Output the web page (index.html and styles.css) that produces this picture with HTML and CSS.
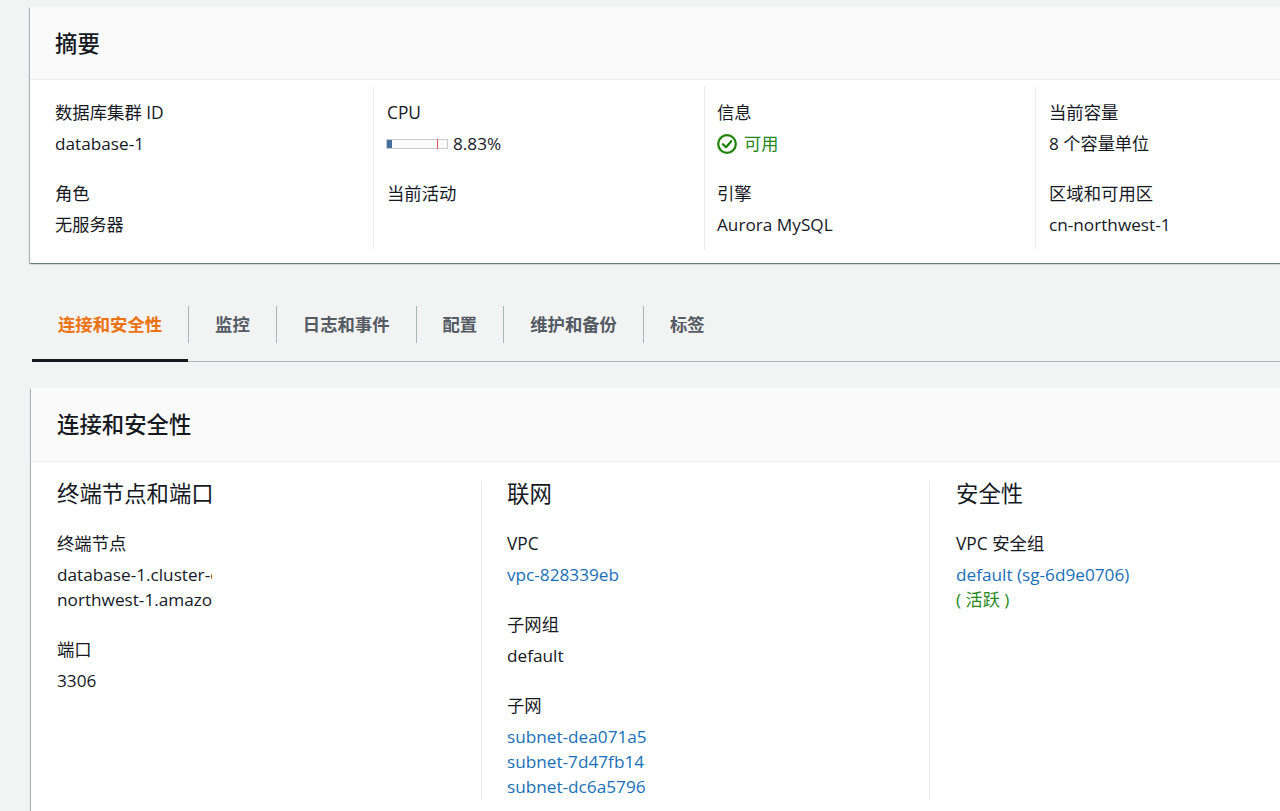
FILE: index.html
```html
<!DOCTYPE html>
<html lang="zh-CN">
<head>
    <meta charset="UTF-8">
    <meta name="viewport" content="width=device-width, initial-scale=1.0">
    <title>database-1</title>
    <link rel="stylesheet" href="styles.css">
</head>
<body>
    <div class="page">
        <div class="card summary">
            <div class="card-header"><h2>摘要</h2></div>
            <div class="summary-grid">
                <div class="col">
                    <div class="item"><div class="label">数据库集群 ID</div><div class="value">database-1</div></div>
                    <div class="item"><div class="label">角色</div><div class="value">无服务器</div></div>
                </div>
                <div class="col">
                    <div class="item">
                        <div class="label">CPU</div>
                        <div class="value cpu">
                            <svg class="meter" width="62" height="10" viewBox="0 0 62 10">
                                <rect x="0.5" y="0.5" width="61" height="9" fill="#fafafa" stroke="#c9cbcd"/>
                                <rect x="1" y="1" width="5" height="8" fill="#44709a"/>
                                <rect x="51" y="0" width="1" height="10" fill="#e8505a"/>
                            </svg>
                            <span>8.83%</span>
                        </div>
                    </div>
                    <div class="item"><div class="label">当前活动</div></div>
                </div>
                <div class="col">
                    <div class="item">
                        <div class="label">信息</div>
                        <div class="value status">
                            <svg width="20" height="20" viewBox="0 0 20 20" fill="none" stroke="#1d8102" stroke-width="2.2">
                                <circle cx="10" cy="10" r="8.8"/>
                                <path d="M6 10.2l3 3 5.2-6" stroke-linecap="round" stroke-linejoin="round"/>
                            </svg>
                            <span>可用</span>
                        </div>
                    </div>
                    <div class="item"><div class="label">引擎</div><div class="value">Aurora MySQL</div></div>
                </div>
                <div class="col">
                    <div class="item"><div class="label">当前容量</div><div class="value">8 个容量单位</div></div>
                    <div class="item"><div class="label">区域和可用区</div><div class="value">cn-northwest-1</div></div>
                </div>
            </div>
        </div>

        <div class="tabs">
            <a class="tab active">连接和安全性</a>
            <a class="tab">监控</a>
            <a class="tab">日志和事件</a>
            <a class="tab">配置</a>
            <a class="tab">维护和备份</a>
            <a class="tab">标签</a>
        </div>

        <div class="card conn">
            <div class="card-header"><h2>连接和安全性</h2></div>
            <div class="conn-grid">
                <div class="section">
                    <h3>终端节点和端口</h3>
                    <div class="item">
                        <div class="label">终端节点</div>
                        <div class="value clipped">database-1.cluster-cxq<br>northwest-1.amazonaws</div>
                    </div>
                    <div class="item"><div class="label">端口</div><div class="value">3306</div></div>
                </div>
                <div class="section">
                    <h3>联网</h3>
                    <div class="item"><div class="label">VPC</div><div class="value"><a class="link">vpc-828339eb</a></div></div>
                    <div class="item"><div class="label">子网组</div><div class="value">default</div></div>
                    <div class="item">
                        <div class="label">子网</div>
                        <div class="value"><a class="link">subnet-dea071a5</a><br><a class="link">subnet-7d47fb14</a><br><a class="link">subnet-dc6a5796</a></div>
                    </div>
                </div>
                <div class="section">
                    <h3>安全性</h3>
                    <div class="item">
                        <div class="label">VPC 安全组</div>
                        <div class="value"><a class="link">default (sg-6d9e0706)</a><br><span class="active-text">( 活跃 )</span></div>
                    </div>
                </div>
            </div>
        </div>
    </div>
</body>
</html>
```

FILE: styles.css
```css
* {
    margin: 0;
    padding: 0;
    box-sizing: border-box;
}

html, body {
    height: 100%;
    overflow: hidden;
}

body {
    font-family: "Open Sans", "Noto Sans CJK SC", sans-serif;
    font-size: 17.35px;
    line-height: 25px;
    color: #16191f;
    background: #f2f3f3;
}

.page {
    width: 1500px;
    padding: 7px 0 0 30px;
}

.card {
    background: white;
    box-shadow: 0 1px 1px 0 rgba(0,28,36,0.3), 1px 1px 1px 0 rgba(0,28,36,0.15), -1px 1px 1px 0 rgba(0,28,36,0.25);
}

.card-header {
    height: 73px;
    padding-left: 25px;
    display: flex;
    align-items: center;
    background: #fafafa;
    border-bottom: 1px solid #eaeded;
}

.card-header h2 {
    font-size: 22.4px;
    font-weight: 500;
}

.item {
    margin-bottom: 25px;
}

.item:last-child {
    margin-bottom: 0;
}

.label {
    margin-bottom: 6px;
}

.value {
    font-size: 17.2px;
}

.summary-grid {
    display: grid;
    grid-template-columns: 344px 331px 331px 331px;
    padding: 6px 0 13px;
}

.summary-grid .col {
    padding: 14px 13px 0 13px;
    height: 164px;
    border-right: 1px solid #eaeded;
}

.summary-grid .col:first-child {
    padding-left: 25px;
}

.summary-grid .col:nth-child(3) {
    padding-left: 12px;
}

.cpu, .status {
    display: flex;
    align-items: center;
    gap: 5px;
}

.meter {
    flex-shrink: 0;
    margin: 1px 0 0 -1px;
}

.status {
    gap: 7px;
    color: #26881a;
}

.tabs {
    display: flex;
    margin: 43px 0 26px 2px;
    height: 56px;
    border-bottom: 1px solid #aab7b8;
    font-weight: 700;
    color: #545b64;
}

.tab {
    position: relative;
    height: 37px;
    padding: 6px 26px;
    border-right: 1px solid #aab7b8;
}

.tab:last-child {
    border-right: none;
}

.tab.active {
    color: #ec7211;
}

.tab.active::after {
    content: "";
    position: absolute;
    left: 0;
    right: 0;
    top: 53px;
    height: 3px;
    background: #16191f;
}

.conn {
    margin-left: 1px;
}

.conn .card-header {
    height: 74px;
    padding-left: 26px;
}

.conn-grid {
    display: grid;
    grid-template-columns: 451px 448px 448px;
    padding: 19px 0 40px;
}

.section {
    height: 319px;
    padding: 0 26px;
    border-right: 1px solid #eaeded;
}

.section:nth-child(2) {
    padding-left: 25px;
}

.section h3 {
    font-size: 22.4px;
    font-weight: 400;
    line-height: 26px;
    margin-bottom: 24px;
}

.clipped {
    width: 155px;
    overflow: hidden;
    white-space: nowrap;
}

.link {
    color: #1a70b8;
}

.active-text {
    color: #26881a;
}
```
